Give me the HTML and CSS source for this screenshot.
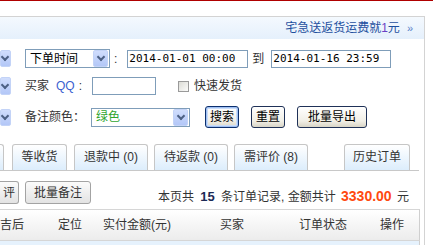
FILE: index.html
```html
<!DOCTYPE html>
<html lang="zh-CN">
<head>
    <meta charset="UTF-8">
    <title>订单管理</title>
    <link rel="stylesheet" href="styles.css">
</head>
<body>
    <div class="topbar"></div>
    <div class="panel">
        <div class="notice">
            <a href="#">宅急送返货运费就<span class="one">1</span>元</a>
            <span class="more">»</span>
        </div>

        <!-- 搜索条件 -->
        <div class="filters">
            <div class="frow r1">
                <span class="arrow stub"></span>
                <div class="select sel-time">下单时间<span class="arrow"></span></div>
                <span class="colon">:</span>
                <input class="field date" type="text" value="2014-01-01 00:00">
                <span class="to">到</span>
                <input class="field date date2" type="text" value="2014-01-16 23:59">
            </div>
            <div class="frow r2">
                <span class="arrow stub"></span>
                <span class="label">买家</span>
                <span class="qq">QQ</span>
                <span class="colon2">:</span>
                <input class="field qq-field" type="text" value="">
                <span class="check"></span>
                <span class="check-label">快速发货</span>
            </div>
            <div class="frow r3">
                <span class="arrow stub"></span>
                <span class="label">备注颜色：</span>
                <div class="select sel-color"><span class="green">绿色</span><span class="arrow"></span></div>
                <button class="btn focus">搜索</button>
                <button class="btn">重置</button>
                <button class="btn wide">批量导出</button>
            </div>
        </div>

        <!-- 订单状态 -->
        <div class="tabs">
            <span class="tab stub-tab"></span>
            <span class="tab t-short">等收货</span>
            <span class="tab">退款中 <small>(0)</small></span>
            <span class="tab">待返款 <small>(0)</small></span>
            <span class="tab">需评价 <small>(8)</small></span>
            <span class="tab t-history">历史订单</span>
        </div>

        <div class="actions">
            <button class="gbtn stub-btn">评</button>
            <button class="gbtn">批量备注</button>
            <div class="summary">本页共 <b class="count">15</b> 条订单记录, 金额共计 <b class="amount">3330.00</b> 元</div>
        </div>

        <div class="thead">
            <span class="c1">吉后</span>
            <span class="c2">定位</span>
            <span class="c3">实付金额(元)</span>
            <span class="c4">买家</span>
            <span class="c5">订单状态</span>
            <span class="c6">操作</span>
        </div>
        <div class="trow"></div>
    </div>
</body>
</html>
```

FILE: styles.css
```css
* {
    box-sizing: border-box;
}
body {
    margin: 0;
    font: 12px/1 "Liberation Sans", "Noto Sans CJK SC", sans-serif;
    color: #333;
    background: #fff;
    height: 245px;
    overflow: hidden;
}
.topbar {
    height: 1px;
    background: #b00000;
}
.panel {
    margin-top: 15px;
    width: 425px;
    height: 229px;
    border-top: 1px solid #d3d3d3;
    border-right: 1px solid #d3d3d3;
}
.notice {
    height: 22px;
    display: flex;
    align-items: center;
    justify-content: flex-end;
    padding-right: 11px;
    background: linear-gradient(#f4f9fe, #e5f0fc);
}
.notice a {
    color: #1d4f9e;
    text-decoration: none;
}
.notice .one {
    color: #6a3fc4;
}
.notice .more {
    margin-left: 7px;
    color: #5a7fc8;
    font-size: 11px;
}

/* filtros */
.filters {
    padding-top: 10px;
}
.frow {
    display: flex;
    align-items: center;
}
.r1 {
    height: 19px;
    margin-bottom: 9px;
}
.r2 {
    height: 18px;
    margin-bottom: 11px;
}
.r3 {
    height: 22px;
}
.arrow {
    display: flex;
    align-items: center;
    justify-content: center;
    width: 15px;
    height: 17px;
    border: 1px solid #c3d3f7;
    border-radius: 2px;
    background: linear-gradient(#d0ddfd, #b3c7f7);
}
.arrow::after {
    content: '';
    width: 4px;
    height: 4px;
    margin-top: -3px;
    border-right: 2px solid #4d6185;
    border-bottom: 2px solid #4d6185;
    transform: rotate(45deg);
}
.arrow.stub {
    width: 11px;
    margin-right: 14px;
    justify-content: flex-start;
    padding-left: 1px;
}
.r2 .arrow.stub {
    height: 18px;
}
.select {
    display: flex;
    align-items: center;
    justify-content: space-between;
    height: 19px;
    padding: 0 1px 0 4px;
    border: 1px solid #7f9db9;
    background: #fff;
    color: #000;
}
.sel-time {
    width: 85px;
}
.sel-color {
    width: 99px;
    margin-left: 6px;
}
.green {
    color: #2fa52f;
}
.colon {
    margin: 0 10px 0 4px;
}
.field {
    height: 18px;
    margin: 0;
    padding: 0 1px;
    border: 1px solid #7f9db9;
    font: 11px "DejaVu Sans Mono", monospace;
    color: #000;
    outline: none;
}
.date {
    width: 121px;
}
.to {
    margin: 0 7px 0 4px;
}
.date2 {
    width: 120px;
}
.label {
    color: #333;
}
.qq {
    margin-left: 7px;
    color: #3b5fd0;
}
.colon2 {
    margin: 0 10px 0 4px;
}
.qq-field {
    width: 64px;
}
.check {
    width: 11px;
    height: 11px;
    margin: 0 5px 0 22px;
    border: 1px solid #9a9a9a;
    background: linear-gradient(135deg, #dcdcd6, #fbfbfa);
}
.btn {
    height: 22px;
    width: 34px;
    margin-left: 12px;
    padding: 0;
    border: 1px solid #1f3157;
    border-radius: 3px;
    background: linear-gradient(#ffffff, #f1efe6 70%, #d9d5c6);
    font: 12px/1 "Liberation Sans", "Noto Sans CJK SC", sans-serif;
    color: #000;
}
.btn.focus {
    margin-left: 15px;
    border-color: #0c2f6e;
    box-shadow: inset 0 0 0 1px #9fc0f3, inset 0 0 0 2px #cadcf8;
}
.btn.wide {
    width: 70px;
}

/* abas */
.tabs {
    display: flex;
    align-items: flex-end;
    width: 419px;
    height: 27px;
    margin-top: 16px;
    border-bottom: 1px solid #c8c8c8;
}
.tab {
    height: 26px;
    width: 74px;
    margin-right: 6px;
    border: 1px solid #c6c6c6;
    border-bottom: none;
    border-radius: 3px 3px 0 0;
    background: linear-gradient(#ffffff, #dcedfc);
    line-height: 24px;
    text-align: center;
    color: #333;
}
.tab small {
    font-size: 12px;
}
.stub-tab {
    width: 4px;
    border-left: none;
    border-radius: 0 3px 0 0;
    margin-right: 8px;
}
.t-short {
    width: 55px;
    margin-right: 7px;
}
.t-history {
    width: 66px;
    margin-left: 30px;
}

/* ações */
.actions {
    display: flex;
    align-items: center;
    width: 419px;
    height: 23px;
    margin-top: 10px;
    padding-right: 10px;
}
.gbtn {
    height: 23px;
    width: 66px;
    padding: 0;
    border: 1px solid #a3a3a3;
    border-radius: 3px;
    background: linear-gradient(#fbfbfb, #e3e3e3);
    font: 12px/1 "Liberation Sans", "Noto Sans CJK SC", sans-serif;
    color: #333;
}
.stub-btn {
    width: 19px;
    border-left: none;
    border-radius: 0 3px 3px 0;
    margin-right: 6px;
    text-align: right;
    padding-right: 3px;
}
.summary {
    margin-left: auto;
    padding-top: 6px;
    color: #333;
}
.count {
    color: #1c2a55;
    font: bold 13px "Liberation Sans", sans-serif;
    margin: 0 3px;
}
.amount {
    color: #ff4a10;
    font: bold 14px "Liberation Sans", sans-serif;
    margin: 0 2px;
}

/* tabela */
.thead {
    display: flex;
    align-items: center;
    width: 420px;
    height: 32px;
    margin-top: 5px;
    border-top: 1px solid #d6d6d6;
    border-right: 1px solid #cfcfcf;
    border-bottom: 1px solid #d6d6d6;
    background: linear-gradient(#ffffff, #ececec);
    color: #333;
}
.c1 { width: 58px; }
.c2 { width: 45px; }
.c3 { width: 117px; }
.c4 { width: 79px; }
.c5 { width: 81px; }
.trow {
    width: 420px;
    height: 10px;
    border-right: 1px solid #cfcfcf;
    background: #e6f2fd;
}
```
